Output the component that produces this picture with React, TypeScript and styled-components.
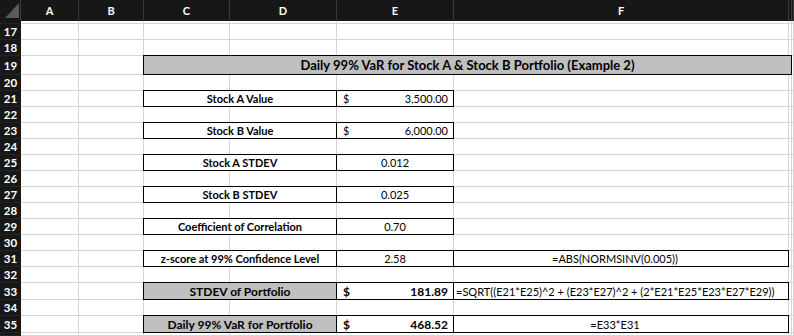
import React from 'react';
import styled, { createGlobalStyle } from 'styled-components';

const Global = createGlobalStyle`
  html, body { margin: 0; padding: 0; background: #ffffff; }
  body {
    width: 794px;
    height: 336px;
    overflow: hidden;
    font-family: Lato, "Liberation Sans", Arial, sans-serif;
    color: #000;
  }
`;

const COLS = '21px 58px 65px 86px 107px 117px 335px 3px 1fr';
const GRID = '#d5d5d5';
const HEAD = '#171717';
const HEAD_LINE = '#3a3a3a';
const FILL = '#bfbfbf';

const Sheet = styled.div`
  display: flex;
  flex-direction: column;
  width: 794px;
  height: 336px;
  overflow: hidden;
`;

const Row = styled.div<{ $h: number }>`
  display: grid;
  grid-template-columns: ${COLS};
  height: ${(p) => p.$h}px;
  flex: none;
`;

const HeaderRow = styled(Row)`
  background: ${HEAD};
`;

const Corner = styled.div`
  position: relative;
  border-right: 1px solid ${HEAD_LINE};
  box-sizing: border-box;
`;

const CornerMark = styled.svg`
  position: absolute;
  left: 5px;
  top: 3px;
`;

const ColLabel = styled.div<{ $edge?: boolean }>`
  display: flex;
  align-items: center;
  justify-content: ${(p) => (p.$edge ? 'flex-start' : 'center')};
  padding-left: ${(p) => (p.$edge ? '1px' : '0')};
  overflow: hidden;
  color: #ffffff;
  font-size: 11px;
  font-weight: 700;
  border-right: 1px solid ${HEAD_LINE};
  box-sizing: border-box;
`;

const RowNum = styled.div`
  background: ${HEAD};
  color: #ffffff;
  font-size: 11.5px;
  font-weight: 700;
  display: flex;
  align-items: center;
  justify-content: center;
  border-bottom: 1px solid #242424;
  box-sizing: border-box;
  overflow: hidden;
`;

const Cell = styled.div`
  border-right: 1px solid ${GRID};
  border-bottom: 1px solid ${GRID};
  box-sizing: border-box;
  min-width: 0;
`;

const Box = styled.div<{
  $span?: number;
  $fill?: boolean;
  $bold?: boolean;
  $align?: 'center' | 'split' | 'left';
  $size?: number;
  $padRight?: number;
}>`
  grid-column: span ${(p) => p.$span ?? 1};
  margin: -1px 0 0 -1px;
  border: 1px solid #000;
  box-sizing: border-box;
  background: ${(p) => (p.$fill ? FILL : '#ffffff')};
  display: flex;
  align-items: center;
  justify-content: ${(p) =>
    p.$align === 'split' ? 'space-between' : p.$align === 'left' ? 'flex-start' : 'center'};
  padding: 0 ${(p) => p.$padRight ?? (p.$align === 'split' ? 5 : 0)}px 0
    ${(p) => (p.$align === 'split' ? 6 : p.$align === 'left' ? 2 : 0)}px;
  font-size: ${(p) => p.$size ?? 11}px;
  font-weight: ${(p) => (p.$bold ? 700 : 400)};
  white-space: nowrap;
  overflow: hidden;
  min-width: 0;
`;

const Blank = ({ n }: { n: number }) => (
  <>
    {Array.from({ length: n }, (_, i) => (
      <Cell key={i} />
    ))}
  </>
);

type Item = {
  row: number;
  label: string;
  big?: boolean;
  dollar?: boolean;
  value: string;
  formula?: string;
  formulaAlign?: 'center' | 'left';
};

const items: Item[] = [
  { row: 21, label: 'Stock A Value', dollar: true, value: '3,500.00' },
  { row: 23, label: 'Stock B Value', dollar: true, value: '6,000.00' },
  { row: 25, label: 'Stock A STDEV', value: '0.012' },
  { row: 27, label: 'Stock B STDEV', value: '0.025' },
  { row: 29, label: 'Coefficient of Correlation', value: '0.70' },
  {
    row: 31,
    label: 'z-score at 99% Confidence Level',
    value: '2.58',
    formula: '=ABS(NORMSINV(0.005))',
    formulaAlign: 'center',
  },
  {
    row: 33,
    label: 'STDEV of Portfolio',
    big: true,
    dollar: true,
    value: '181.89',
    formula: '=SQRT((E21*E25)^2 + (E23*E27)^2 + (2*E21*E25*E23*E27*E29))',
    formulaAlign: 'left',
  },
  {
    row: 35,
    label: 'Daily 99% VaR for Portfolio',
    big: true,
    dollar: true,
    value: '468.52',
    formula: '=E33*E31',
    formulaAlign: 'center',
  },
];

const heightOf = (r: number) => (r === 19 ? 19 : r === 33 || r === 35 ? 17 : 16);

const EmptyRow = ({ n, h }: { n?: number; h: number }) => (
  <Row $h={h}>
    <RowNum>{n ?? ''}</RowNum>
    <Blank n={8} />
  </Row>
);

const DataRow = ({ it }: { it: Item }) => (
  <Row $h={heightOf(it.row)}>
    <RowNum>{it.row}</RowNum>
    <Blank n={2} />
    <Box $span={2} $fill={it.big} $bold $size={it.big ? 12 : 11}>
      {it.label}
    </Box>
    {it.dollar ? (
      <Box $align="split" $bold={it.big} $size={it.big ? 12 : 11}>
        <span>$</span>
        <span>{it.value}</span>
      </Box>
    ) : (
      <Box $size={11}>{it.value}</Box>
    )}
    {it.formula ? (
      <Box $align={it.formulaAlign} $size={11} $padRight={it.formulaAlign === 'center' ? 12 : 0}>
        {it.formula}
      </Box>
    ) : (
      <Cell />
    )}
    <Blank n={2} />
  </Row>
);

export default function App() {
  const rows: React.ReactNode[] = [];
  for (let r = 17; r <= 35; r++) {
    const it = items.find((x) => x.row === r);
    if (r === 19) {
      rows.push(
        <Row key={r} $h={19}>
          <RowNum>19</RowNum>
          <Blank n={2} />
          <Box $span={5} $fill $bold $size={13}>
            Daily 99% VaR for Stock A &amp; Stock B Portfolio (Example 2)
          </Box>
          <Cell />
        </Row>
      );
    } else if (it) {
      rows.push(<DataRow key={r} it={it} />);
    } else {
      rows.push(<EmptyRow key={r} n={r} h={heightOf(r)} />);
    }
  }

  return (
    <>
      <Global />
      <Sheet>
        <HeaderRow $h={21}>
          <Corner>
            <CornerMark width="14" height="15" viewBox="0 0 14 15">
              <polygon points="14,0 14,15 0,15" fill="#5a5a5a" />
            </CornerMark>
          </Corner>
          {['A', 'B', 'C', 'D', 'E', 'F'].map((c) => (
            <ColLabel key={c}>{c}</ColLabel>
          ))}
          <ColLabel />
          <ColLabel $edge>G</ColLabel>
        </HeaderRow>
        <EmptyRow h={3} />
        {rows}
        <EmptyRow h={3} />
      </Sheet>
    </>
  );
}
